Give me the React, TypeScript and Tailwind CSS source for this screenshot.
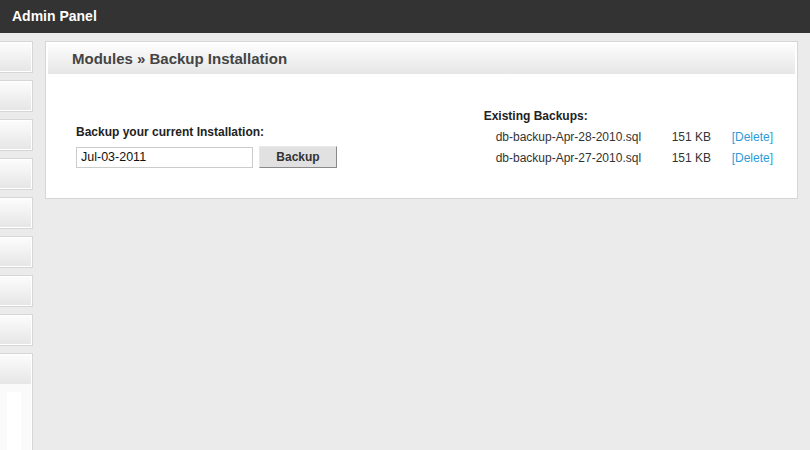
const font = { fontFamily: "'Liberation Sans', Arial, sans-serif" };

const backups = [
  { name: 'db-backup-Apr-28-2010.sql', size: '151 KB' },
  { name: 'db-backup-Apr-27-2010.sql', size: '151 KB' },
];

function SideButton() {
  return (
    <div className="h-[32px] w-[33px] border border-l-0 border-[#d5d6d5] bg-white py-px pr-px">
      <div className="h-full w-full bg-gradient-to-b from-[#fcfcfc] to-[#e6e6e6]" />
    </div>
  );
}

export default function App() {
  return (
    <div className="flex h-[450px] w-[810px] flex-col overflow-hidden bg-[#eaebea]" style={font}>
      {/* Top bar */}
      <div className="flex h-[33px] shrink-0 items-center bg-[#333333] px-[12px]">
        <span className="text-[14px] font-bold text-white">Admin Panel</span>
      </div>

      <div className="flex flex-1 gap-[12px] pt-[8px]">
        {/* Sidebar */}
        <div className="flex w-[33px] flex-col gap-[7px]">
          {Array.from({ length: 8 }).map((_, i) => (
            <SideButton key={i} />
          ))}
          <div className="flex-1 border border-b-0 border-l-0 border-[#d5d6d5] bg-white pr-px pt-px">
            <div className="h-[29px] bg-gradient-to-b from-[#fcfcfc] to-[#e6e6e6]" />
            <div className="flex h-full bg-[#fafafa] pl-[7px] pt-[8px]">
              <div className="h-full w-[14px] bg-white" />
            </div>
          </div>
        </div>

        {/* Main panel */}
        <div className="mr-[12px] flex-1 self-start">
          <div className="border border-[#d5d6d5] bg-white p-[2px]">
            <div className="flex h-[30px] items-center bg-gradient-to-b from-[#fdfdfd] to-[#e6e6e6] px-[24px]">
              <span className="text-[15px] font-bold leading-[16px] text-[#444444]">Modules » Backup Installation</span>
            </div>

            <div className="flex items-start justify-between pb-[28px] pl-[28px] pr-[22px]">
              {/* Create backup */}
              <div className="flex flex-col pt-[51px]">
                <span className="text-[12px] font-bold leading-[14px] text-[#222222]">
                  Backup your current Installation:
                </span>
                <div className="mt-[7px] flex items-center gap-[6px]">
                  <input
                    defaultValue="Jul-03-2011"
                    className="h-[21px] w-[177px] border border-[#cccccc] bg-white px-[4px] text-[12.5px] text-[#111111] outline-none"
                    style={font}
                  />
                  <button
                    className="h-[22px] w-[78px] border border-t-[#e8e8e8] border-l-[#e8e8e8] border-b-[#8a8a8a] border-r-[#8a8a8a] bg-[#e1e1e1] text-[12px] font-bold text-[#333333]"
                    style={font}
                  >
                    Backup
                  </button>
                </div>
              </div>

              {/* Existing backups */}
              <div className="flex flex-col pt-[35px]">
                <span className="text-[12px] font-bold leading-[14px] text-[#222222]">Existing Backups:</span>
                <div className="mt-[7px] flex flex-col gap-[7px] pl-[12px]">
                  {backups.map((b) => (
                    <div key={b.name} className="flex text-[12px] leading-[14px] text-[#333333]">
                      <span className="w-[176px]">{b.name}</span>
                      <span className="w-[60px]">{b.size}</span>
                      <span className="text-[#2b9bd8]">[Delete]</span>
                    </div>
                  ))}
                </div>
              </div>
            </div>
          </div>
        </div>
      </div>
    </div>
  );
}
